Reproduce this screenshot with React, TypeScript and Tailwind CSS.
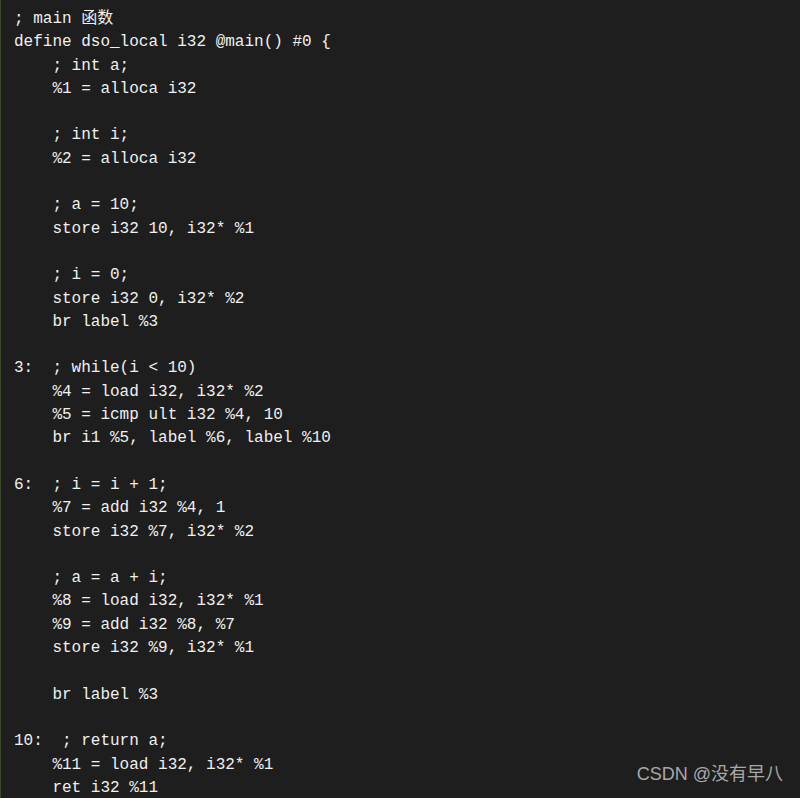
import React from 'react';

const code = `; main 函数
define dso_local i32 @main() #0 {
    ; int a;
    %1 = alloca i32

    ; int i;
    %2 = alloca i32

    ; a = 10;
    store i32 10, i32* %1

    ; i = 0;
    store i32 0, i32* %2
    br label %3

3:  ; while(i < 10)
    %4 = load i32, i32* %2
    %5 = icmp ult i32 %4, 10
    br i1 %5, label %6, label %10

6:  ; i = i + 1;
    %7 = add i32 %4, 1
    store i32 %7, i32* %2

    ; a = a + i;
    %8 = load i32, i32* %1
    %9 = add i32 %8, %7
    store i32 %9, i32* %1

    br label %3

10:  ; return a;
    %11 = load i32, i32* %1
    ret i32 %11`;

function App() {
  return (
    <div className="relative h-[798px] w-[800px] overflow-hidden bg-[#1e1e1e] border-l border-[#3b4a2c]">
      <pre className="m-0 pl-[13px] pt-[8px] text-[16px] leading-[23.3px] text-[#f0f0f0] whitespace-pre font-['Liberation_Mono','Noto_Sans_CJK_SC',monospace]">
        {code}
      </pre>
      <div className="absolute right-[17px] bottom-[10px] text-[18px] text-[#a8a8a8] font-['Liberation_Sans','Noto_Sans_CJK_SC',sans-serif]">
        CSDN @没有早八
      </div>
    </div>
  );
}

export default App;
